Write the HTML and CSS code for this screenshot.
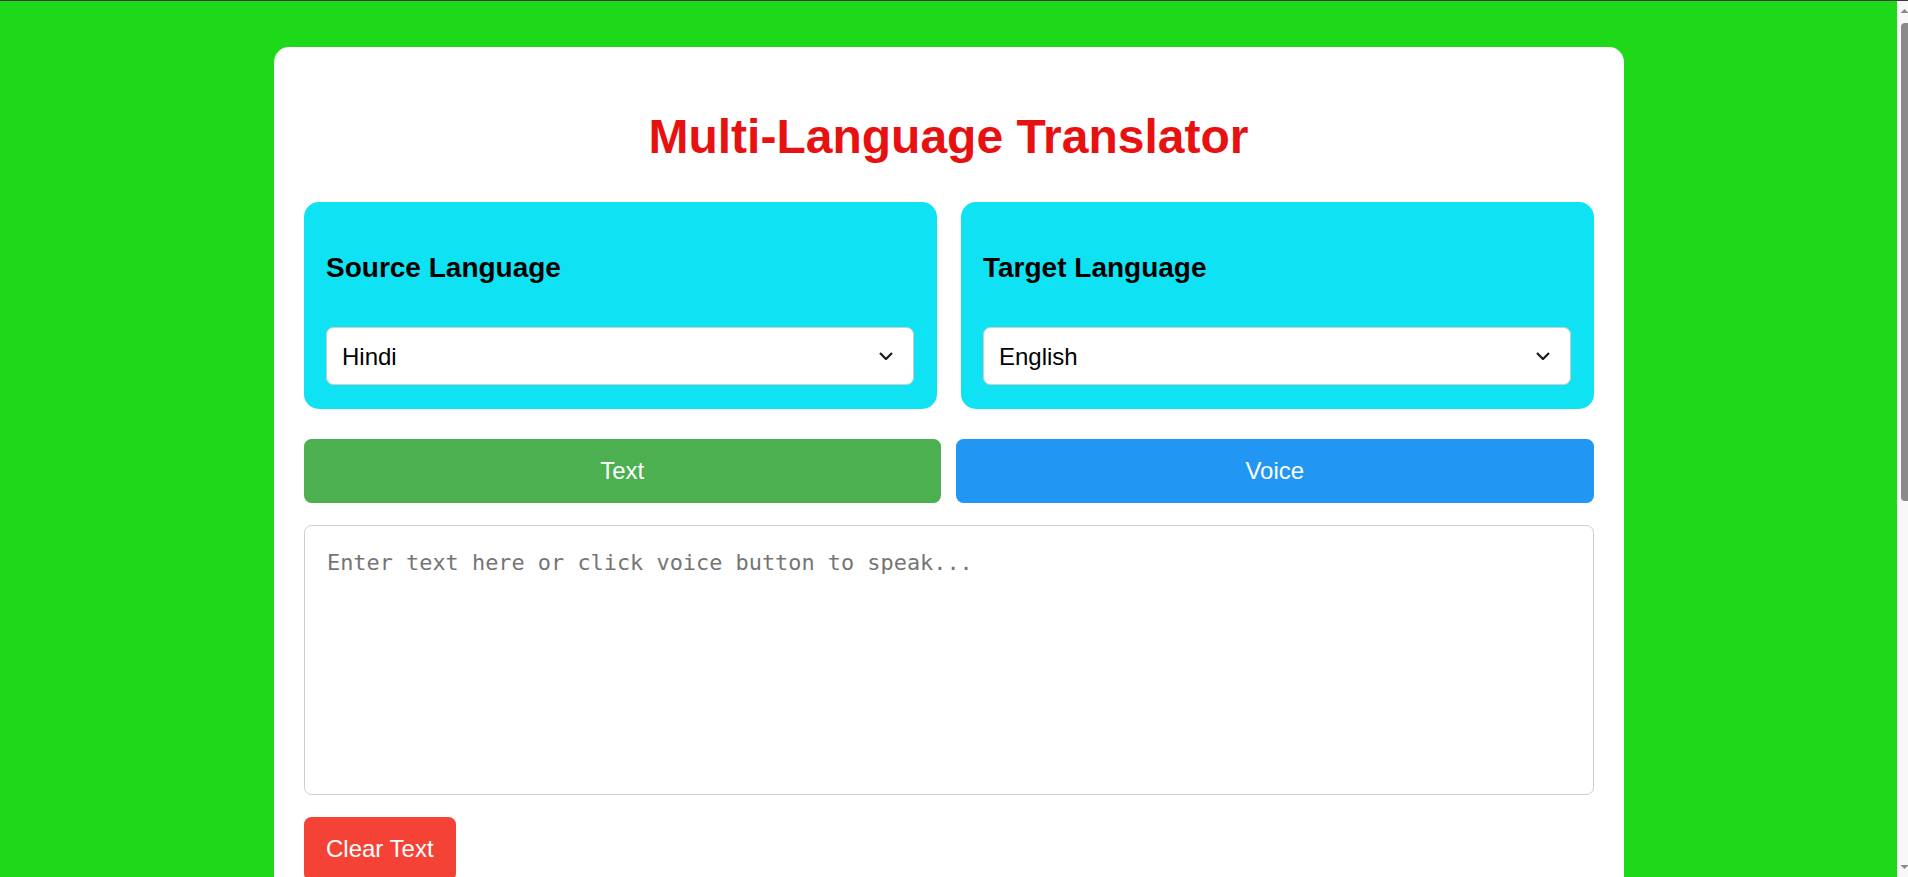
FILE: index.html
```html
<!DOCTYPE html>
<html lang="en">
<head>
<meta charset="utf-8">
<title>Multi-Language Translator</title>
<link rel="stylesheet" href="styles.css">
</head>
<body>
<div class="viewport">
  <main class="page">
    <div class="card">
      <h1 class="title">Multi-Language Translator</h1>

      <div class="lang-grid">
        <section class="lang-panel">
          <h3 class="lang-heading">Source Language</h3>
          <select class="lang-select">
            <option selected>Hindi</option>
            <option>English</option>
            <option>Spanish</option>
            <option>French</option>
            <option>German</option>
          </select>
        </section>
        <section class="lang-panel">
          <h3 class="lang-heading">Target Language</h3>
          <select class="lang-select">
            <option selected>English</option>
            <option>Hindi</option>
            <option>Spanish</option>
            <option>French</option>
            <option>German</option>
          </select>
        </section>
      </div>

      <div class="mode-row">
        <button class="mode-btn mode-text" type="button">Text</button>
        <button class="mode-btn mode-voice" type="button">Voice</button>
      </div>

      <textarea class="input-text" placeholder="Enter text here or click voice button to speak..."></textarea>

      <div class="actions">
        <button class="clear-btn" type="button">Clear Text</button>
      </div>

      <div class="actions">
        <button class="translate-btn" type="button">Translate</button>
      </div>

      <div class="output-box"></div>
    </div>
  </main>

  <div class="scrollbar">
    <svg class="sb-arrow" width="11" height="16" viewBox="0 0 11 16"><polygon points="3.5,12 7.5,8 11.5,12" fill="#8a8a8a"/></svg>
    <div class="sb-track"><div class="sb-thumb"></div></div>
    <svg class="sb-arrow" width="11" height="16" viewBox="0 0 11 16"><polygon points="3.5,4 7.5,8 11.5,4" fill="#8a8a8a"/></svg>
  </div>
</div>
</body>
</html>
```

FILE: styles.css
```css
html, body {
  margin: 0;
  height: 100%;
  overflow: hidden;
}

body {
  box-sizing: border-box;
  border-top: 1px solid #3a3a3a;
  background: #1ed81a;
  font-family: "Liberation Sans", Arial, sans-serif;
  color: #000;
}

.viewport {
  display: flex;
  height: 100%;
}

.page {
  flex: 1;
  min-width: 0;
  overflow: hidden;
  padding-top: 46px;
}

.card {
  box-sizing: border-box;
  width: 1350px;
  margin: 0 auto;
  background: #fff;
  border-radius: 15px;
  padding: 30px;
}

.title {
  margin: 32px 0 38px;
  font-size: 48px;
  font-weight: bold;
  line-height: normal;
  color: #e81111;
  text-align: center;
}

.lang-grid {
  display: grid;
  grid-template-columns: 1fr 1fr;
  gap: 24px;
  margin-bottom: 30px;
}

.lang-panel {
  background: #0fe3f3;
  border-radius: 15px;
  padding: 22.5px 22.5px 24px;
}

.lang-heading {
  margin: 27px 0 43.5px;
  font-size: 28px;
  font-weight: bold;
  line-height: normal;
}

.lang-select {
  display: block;
  box-sizing: border-box;
  width: 100%;
  height: 58px;
  margin: 0;
  padding: 0 15px;
  border: 1.5px solid #ccc;
  border-radius: 7.5px;
  font-family: "Liberation Sans", Arial, sans-serif;
  font-size: 24px;
  color: #000;
  -webkit-appearance: none;
  appearance: none;
  background: #fff url("data:image/svg+xml,%3Csvg xmlns='http://www.w3.org/2000/svg' width='14' height='8' viewBox='0 0 14 8'%3E%3Cpath d='M1 1 L7 7 L13 1' fill='none' stroke='%231a1a1a' stroke-width='2.2'/%3E%3C/svg%3E") no-repeat right 20px center / 14px 8px;
}

.mode-row {
  display: flex;
  gap: 15px;
}

.mode-btn {
  flex: 1;
  padding: 18px 0;
  border: none;
  border-radius: 7.5px;
  font-family: "Liberation Sans", Arial, sans-serif;
  font-size: 24px;
  line-height: 28px;
  color: #fff;
  cursor: pointer;
}

.mode-text {
  background: #4caf50;
}

.mode-voice {
  background: #2196f3;
}

.input-text {
  display: block;
  box-sizing: border-box;
  width: 100%;
  height: 270px;
  margin-top: 22px;
  padding: 23.5px 22.5px 22.5px;
  border: 1.5px solid #ccc;
  border-radius: 7.5px;
  font-family: "DejaVu Sans Mono", "Liberation Mono", monospace;
  font-size: 21.9px;
  resize: none;
  color: #000;
}

.input-text::placeholder {
  color: #757575;
}

.actions {
  display: flex;
  margin-top: 21.5px;
}

.clear-btn,
.translate-btn {
  padding: 18px 22.5px;
  border: none;
  border-radius: 7.5px;
  font-family: "Liberation Sans", Arial, sans-serif;
  font-size: 24px;
  line-height: 28px;
  color: #fff;
  cursor: pointer;
}

.clear-btn {
  background: #f44336;
}

.translate-btn {
  background: #2196f3;
}

.output-box {
  margin-top: 22.5px;
  min-height: 270px;
  border: 1.5px solid #ccc;
  border-radius: 7.5px;
}

.scrollbar {
  width: 11px;
  flex: none;
  display: flex;
  flex-direction: column;
  background: #f8f8f8;
}

.sb-arrow {
  display: block;
  flex: none;
}

.sb-track {
  flex: 1;
  padding-top: 6px;
}

.sb-thumb {
  width: 7px;
  height: 478px;
  margin-left: 4px;
  background: #8a8a8a;
  border-radius: 4px 0 0 4px;
}
```
